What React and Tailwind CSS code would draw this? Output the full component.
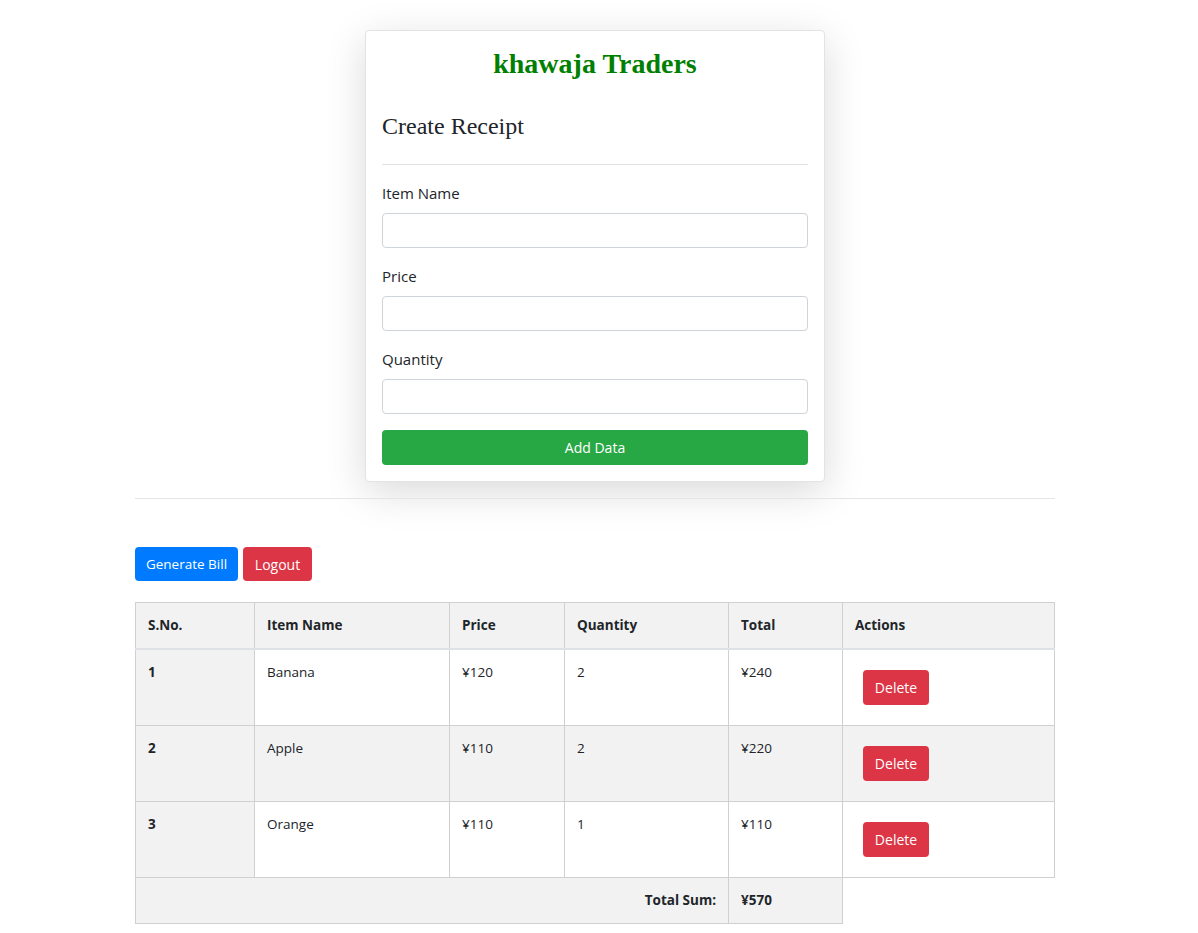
import { useState } from "react";

const items = [
  { id: 1, name: "Banana", price: 120, qty: 2 },
  { id: 2, name: "Apple", price: 110, qty: 2 },
  { id: 3, name: "Orange", price: 110, qty: 1 },
];

export default function App() {
  const [rows, setRows] = useState(items);
  const total = rows.reduce((s, r) => s + r.price * r.qty, 0);

  return (
    <div className="min-h-screen bg-white pr-[8px] text-[#212529] font-['Open_Sans',sans-serif]">
      <div className="mx-auto w-[920px]">
        {/* Receipt form card */}
        <div className="mx-auto mt-[30px] w-[460px] rounded border border-[#e3e3e3] bg-white p-4 shadow-[0_10px_40px_rgba(0,0,0,0.15)]">
          <h3 className="text-center font-['Liberation_Serif',serif] text-[28px] font-bold leading-[33px] text-[#008000]">
            khawaja Traders
          </h3>
          <h4 className="mt-[32px] font-['Liberation_Serif',serif] text-[24px] leading-[29px]">
            Create Receipt
          </h4>
          <hr className="mt-[23px] border-t border-[#e2e2e2]" />

          <div className="mt-4 space-y-4">
            {["Item Name", "Price", "Quantity"].map((label) => (
              <div key={label}>
                <label className="block text-[15px] leading-6">{label}</label>
                <input
                  type="text"
                  className="mt-2 block h-[35px] w-full rounded border border-[#ced4da] bg-white px-3"
                />
              </div>
            ))}
            <button className="block h-[35px] w-full rounded bg-[#28a745] text-[14px] text-white">
              Add Data
            </button>
          </div>
        </div>

        <hr className="mt-[16px] border-t border-[#e5e5e5]" />

        {/* Actions */}
        <div className="mt-[48px] flex gap-[5px]">
          <button className="h-[34px] w-[103px] rounded bg-[#007bff] text-[13.5px] text-white">
            Generate Bill
          </button>
          <button className="h-[34px] w-[69px] rounded bg-[#dc3545] text-[14px] text-white">
            Logout
          </button>
        </div>

        {/* Items table */}
        <table className="mt-[21px] w-full border-collapse text-[13.5px] leading-[21px]">
          <thead>
            <tr className="bg-[#f2f2f2] text-left">
              <th className="w-[119px] border border-b-2 border-[#d0d0d0] border-b-[#dee2e6] px-3 py-[12px] font-bold">S.No.</th>
              <th className="w-[195px] border border-b-2 border-[#d0d0d0] border-b-[#dee2e6] px-3 py-[12px] font-bold">Item Name</th>
              <th className="w-[115px] border border-b-2 border-[#d0d0d0] border-b-[#dee2e6] px-3 py-[12px] font-bold">Price</th>
              <th className="w-[164px] border border-b-2 border-[#d0d0d0] border-b-[#dee2e6] px-3 py-[12px] font-bold">Quantity</th>
              <th className="w-[114px] border border-b-2 border-[#d0d0d0] border-b-[#dee2e6] px-3 py-[12px] font-bold">Total</th>
              <th className="border border-b-2 border-[#d0d0d0] border-b-[#dee2e6] px-3 py-[12px] font-bold">Actions</th>
            </tr>
          </thead>
          <tbody>
            {rows.map((r, i) => (
              <tr key={r.id} className={i % 2 === 1 ? "bg-[#f2f2f2]" : "bg-white"}>
                <th className="border border-[#d0d0d0] bg-[#f2f2f2] px-3 py-3 text-left align-top font-bold">
                  {i + 1}
                </th>
                <td className="border border-[#d0d0d0] px-3 py-3 align-top">{r.name}</td>
                <td className="border border-[#d0d0d0] px-3 py-3 align-top">¥{r.price}</td>
                <td className="border border-[#d0d0d0] px-3 py-3 align-top">{r.qty}</td>
                <td className="border border-[#d0d0d0] px-3 py-3 align-top">¥{r.price * r.qty}</td>
                <td className="border border-[#d0d0d0] px-3 py-3 align-top">
                  <button
                    onClick={() => setRows(rows.filter((x) => x.id !== r.id))}
                    className="m-2 h-[35px] w-[66px] rounded bg-[#dc3545] text-[14px] text-white"
                  >
                    Delete
                  </button>
                </td>
              </tr>
            ))}
            <tr>
              <td colSpan={4} className="border border-[#d0d0d0] bg-[#f2f2f2] px-3 py-3 text-right font-bold">
                Total Sum:
              </td>
              <td className="border border-[#d0d0d0] bg-[#f2f2f2] px-3 py-3 font-bold">¥{total}</td>
              <td></td>
            </tr>
          </tbody>
        </table>
      </div>
    </div>
  );
}
